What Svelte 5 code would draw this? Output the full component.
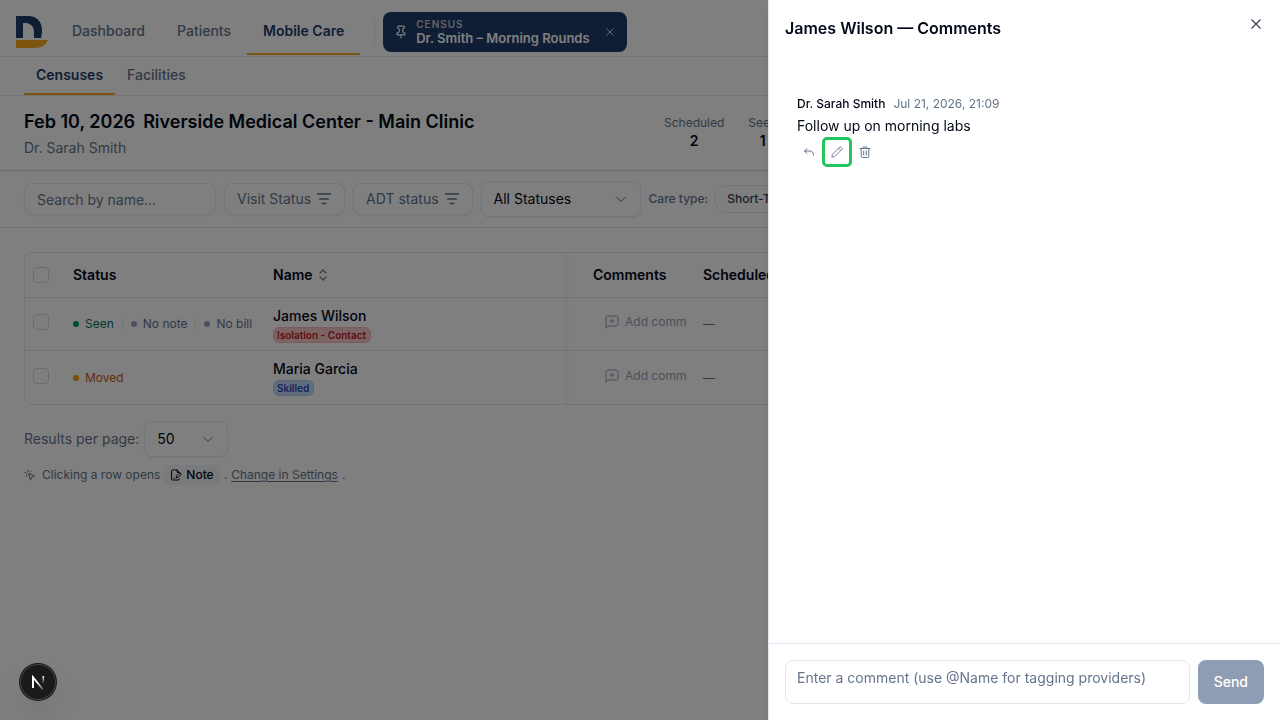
<script lang="ts">
  let search = '';
  let status = 'All Statuses';
  let perPage = '50';
  let draft = '';

  const navLinks = ['Dashboard', 'Patients', 'Mobile Care'];
  const tabs = ['Censuses', 'Facilities'];
  const stats = [
    { label: 'Scheduled', value: 2 },
    { label: 'Seen', value: 1 },
  ];
  const filters = ['Visit Status', 'ADT status'];

  const rows = [
    {
      name: 'James Wilson',
      tag: 'Isolation - Contact',
      tagKind: 'danger',
      states: [
        { text: 'Seen', kind: 'seen' },
        { text: 'No note', kind: 'none' },
        { text: 'No bill', kind: 'none' },
      ],
    },
    {
      name: 'Maria Garcia',
      tag: 'Skilled',
      tagKind: 'info',
      states: [{ text: 'Moved', kind: 'moved' }],
    },
  ];
</script>

<div class="page">
  <header class="topbar">
    <a class="logo" href="#home" aria-label="Home">
      <svg width="32" height="32" viewBox="0 0 32 32">
        <path fill="#213d6b" d="M0 0h12c9 0 14 6 14 14 0 3-.3 5.500-1 8h-7v-6c0-5-3-8.500-8-9H7v15H0z" />
        <path fill="#f9a81c" d="M0 24h32c-2 5-6.500 8-13 8H0z" />
      </svg>
    </a>
    <nav class="main-nav">
      {#each navLinks as link}
        <a href="#nav" class:active={link === 'Mobile Care'}>{link}</a>
      {/each}
    </nav>
    <div class="divider"></div>
    <div class="pinned">
      <svg class="pin" width="14" height="14" viewBox="0 0 24 24" fill="none" stroke="currentColor" stroke-width="2" stroke-linecap="round" stroke-linejoin="round">
        <path d="M12 17v5M9 10.800a2 2 0 0 1-1.100 1.800l-1.800.9A2 2 0 0 0 5 15.200V16a1 1 0 0 0 1 1h12a1 1 0 0 0 1-1v-.8a2 2 0 0 0-1.100-1.800l-1.800-.9A2 2 0 0 1 15 10.800V7a1 1 0 0 1 1-1 2 2 0 0 0 0-4H8a2 2 0 0 0 0 4 1 1 0 0 1 1 1z" />
      </svg>
      <div class="pinned-text">
        <span class="kicker">CENSUS</span>
        <span class="pinned-title">Dr. Smith – Morning Rounds</span>
      </div>
      <button class="unpin" aria-label="Unpin census">
        <svg width="8" height="8" viewBox="0 0 8 8" fill="none" stroke="currentColor"><path d="M0.500 0.500l7 7M7.500 0.500l-7 7" /></svg>
      </button>
    </div>
  </header>

  <nav class="tabs">
    {#each tabs as tab}
      <a href="#tab" class:active={tab === 'Censuses'}>{tab}</a>
    {/each}
  </nav>

  <section class="heading">
    <div class="heading-main">
      <h1><span>Feb 10, 2026</span><span>Riverside Medical Center - Main Clinic</span></h1>
      <p>Dr. Sarah Smith</p>
    </div>
    <dl class="stats">
      {#each stats as stat}
        <div>
          <dt>{stat.label}</dt>
          <dd>{stat.value}</dd>
        </div>
      {/each}
    </dl>
  </section>

  <section class="filters">
    <input class="search" type="text" placeholder="Search by name..." aria-label="Search by name" bind:value={search} />
    {#each filters as filter}
      <button class="filter">
        {filter}
        <svg width="16" height="16" viewBox="0 0 16 16" fill="none" stroke="currentColor" stroke-width="1.500" stroke-linecap="round">
          <path d="M1.500 3h13M3.700 8h8.600M6.200 12.500h3.600" />
        </svg>
      </button>
    {/each}
    <div class="select status-select">
      <select aria-label="Status" bind:value={status}>
        <option>All Statuses</option>
      </select>
      <svg width="16" height="16" viewBox="0 0 16 16" fill="none" stroke="currentColor" stroke-linecap="round" stroke-linejoin="round"><path d="M3.500 6L8 10.500 12.500 6" /></svg>
    </div>
    <span class="care-label">Care type:</span>
    <button class="care-pill">Short-Term</button>
  </section>

  <main>
    <div class="table-wrap">
      <table>
        <colgroup>
          <col class="c-check" />
          <col class="c-status" />
          <col class="c-name" />
          <col class="c-comments" />
          <col />
        </colgroup>
        <thead>
          <tr>
            <th><input type="checkbox" aria-label="Select all" /></th>
            <th>Status</th>
            <th>
              <button class="sort">
                Name
                <svg width="8" height="12" viewBox="0 0 8 12" fill="none" stroke="currentColor" stroke-width="1.200" stroke-linecap="round" stroke-linejoin="round"><path d="M1 4l3-3 3 3M1 8l3 3 3-3" /></svg>
              </button>
            </th>
            <th class="after-sticky">Comments</th>
            <th>Scheduled</th>
          </tr>
        </thead>
        <tbody>
          {#each rows as row}
            <tr>
              <td><input type="checkbox" aria-label={`Select ${row.name}`} /></td>
              <td>
                <div class="states">
                  {#each row.states as state}
                    <span class="state {state.kind}">{state.text}</span>
                  {/each}
                </div>
              </td>
              <td>
                <div class="patient">{row.name}</div>
                <span class="tag {row.tagKind}">{row.tag}</span>
              </td>
              <td class="after-sticky">
                <button class="add-comment">
                  <svg width="14" height="14" viewBox="0 0 14 14" fill="none" stroke="currentColor" stroke-linecap="round" stroke-linejoin="round">
                    <path d="M1 13V2.500Q1 1 2.500 1h9Q13 1 13 2.500v7Q13 11 11.500 11H3zM7 4v4M5 6h4" />
                  </svg>
                  <span>Add comment</span>
                </button>
              </td>
              <td class="empty">—</td>
            </tr>
          {/each}
        </tbody>
      </table>
    </div>

    <div class="per-page">
      <label for="per-page">Results per page:</label>
      <div class="select page-select">
        <select id="per-page" bind:value={perPage}>
          <option>50</option>
        </select>
        <svg width="16" height="16" viewBox="0 0 16 16" fill="none" stroke="currentColor" stroke-linecap="round" stroke-linejoin="round"><path d="M3.500 6L8 10.500 12.500 6" /></svg>
      </div>
    </div>

    <div class="hint">
      <svg class="click" width="12" height="12" viewBox="0 0 24 24" fill="none" stroke="currentColor" stroke-width="2" stroke-linecap="round" stroke-linejoin="round">
        <path d="M14 4.100L12 6M5.100 8l-2.900-.8M6 12l-1.900 2M7.200 2.200L8 5.100M9 9.700a.5.500 0 0 1 .7-.7l11 4.500a.5.500 0 0 1-.1.900l-4.200 1.100a2 2 0 0 0-1.400 1.400l-1.100 4.200a.5.500 0 0 1-.9.100z" />
      </svg>
      <span>Clicking a row opens</span>
      <span class="note">
        <svg width="12" height="12" viewBox="0 0 24 24" fill="none" stroke="currentColor" stroke-width="2" stroke-linecap="round" stroke-linejoin="round">
          <path d="M19 7l-5-5H5a2 2 0 0 0-2 2v16a2 2 0 0 0 2 2h12a2 2 0 0 0 2-2M14 2v4a1 1 0 0 0 1 1h4M8 18h1M21.400 11.600a1 1 0 0 0-3-3l-5 5-1 4 4-1z" />
        </svg>
        Note
      </span>
      <span>.</span>
      <a href="#settings">Change in Settings</a>
      <span>.</span>
    </div>
  </main>
</div>

<div class="overlay"></div>

<aside class="sheet" role="dialog" aria-label="James Wilson — Comments">
  <div class="sheet-head">
    <h2>James Wilson — Comments</h2>
    <button class="close" aria-label="Close">
      <svg width="10" height="10" viewBox="0 0 10 10" fill="none" stroke="currentColor" stroke-width="1.200"><path d="M0.500 0.500l9 9M9.500 0.500l-9 9" /></svg>
    </button>
  </div>

  <div class="thread">
    <article>
      <div class="meta"><strong>Dr. Sarah Smith</strong><time>Jul 21, 2026, 21:09</time></div>
      <p>Follow up on morning labs</p>
      <div class="actions">
        <button aria-label="Reply">
          <svg width="12" height="12" viewBox="0 0 12 12" fill="none" stroke="currentColor" stroke-linecap="round" stroke-linejoin="round"><path d="M4 2.500L1.500 5 4 7.500M1.500 5H7q3.500 0 3.500 4" /></svg>
        </button>
        <button class="current" aria-label="Edit">
          <svg width="12" height="12" viewBox="0 0 12 12" fill="none" stroke="currentColor" stroke-width="0.900" stroke-linejoin="round"><path d="M.8 11.200l.7-3L8.600 1.100q.8-.6 1.600.1l.6.600q.7.800.1 1.600L3.800 10.500zM7.500 2.200l2.300 2.300" /></svg>
        </button>
        <button aria-label="Delete">
          <svg width="12" height="12" viewBox="0 0 12 12" fill="none" stroke="currentColor" stroke-linecap="round" stroke-linejoin="round"><path d="M1 2.500h10M4 2.500v-1q0-.5.500-.5h3q.5 0 .5.500v1M2.200 2.500v7.800q0 1.200 1.200 1.200h5.200q1.200 0 1.200-1.200V2.500M4.700 5v4M7.300 5v4" /></svg>
        </button>
      </div>
    </article>
  </div>

  <form class="composer" on:submit|preventDefault>
    <textarea rows="1" aria-label="Comment" placeholder="Enter a comment (use @Name for tagging providers)" bind:value={draft}></textarea>
    <button type="submit" disabled={!draft}>Send</button>
  </form>
</aside>

<button class="dev-badge" aria-label="Open dev tools">
  <svg width="36" height="36" viewBox="0 0 36 36" fill="none">
    <defs>
      <linearGradient id="stem" x1="0" y1="12" x2="0" y2="20" gradientUnits="userSpaceOnUse">
        <stop offset="0" stop-color="#fff" />
        <stop offset="1" stop-color="#fff" stop-opacity="0" />
      </linearGradient>
      <linearGradient id="slash" x1="18" y1="18" x2="24" y2="25" gradientUnits="userSpaceOnUse">
        <stop offset="0" stop-color="#fff" />
        <stop offset="1" stop-color="#fff" stop-opacity="0.200" />
      </linearGradient>
    </defs>
    <path d="M13 24V13.200L23 25.500" stroke="url(#slash)" stroke-width="1.800" />
    <path d="M13 24V12.500" stroke="#fff" stroke-width="1.800" />
    <path d="M23.300 12v8" stroke="url(#stem)" stroke-width="1.600" />
  </svg>
</button>

<style>
  :global(body) {
    margin: 0;
    background: #fff;
    overflow: hidden;
  }

  :global(#app) {
    font-family: Inter, 'Liberation Sans', sans-serif;
    font-size: 14px;
    line-height: 20px;
    color: #020817;
  }

  button,
  input,
  select,
  textarea {
    font: inherit;
    color: inherit;
    box-sizing: border-box;
  }

  button {
    display: flex;
    align-items: center;
    justify-content: center;
    padding: 0;
    border: 0;
    background: none;
    cursor: pointer;
  }

  a {
    color: inherit;
    text-decoration: none;
  }

  h1,
  h2,
  p,
  dl,
  dd {
    margin: 0;
  }

  svg {
    flex-shrink: 0;
  }

  .page {
    min-height: 100vh;
    overflow: hidden;
  }

  .topbar {
    display: flex;
    align-items: center;
    height: 57px;
    padding: 8px 16px 0;
    box-sizing: border-box;
    border-bottom: 1px solid #e2e8f0;
  }

  .logo {
    display: flex;
    margin-right: 8px;
  }

  .main-nav {
    display: flex;
    align-self: stretch;
  }

  .main-nav a {
    margin-bottom: 1px;
    padding: 13px 16px 0;
    border-bottom: 2px solid transparent;
    font-weight: 500;
    color: #64748b;
  }

  .main-nav a.active,
  .tabs a.active {
    border-bottom-color: #f9a81c;
    font-weight: 600;
    color: #213d6b;
  }

  .divider {
    width: 1px;
    height: 28px;
    margin: 0 8px 0 14px;
    background: #e2e8f0;
  }

  .pinned {
    display: flex;
    align-items: center;
    height: 40px;
    padding: 0 13px 0 11px;
    box-sizing: border-box;
    border-radius: 8px;
    background: #213d6b;
    color: #fff;
  }

  .pin {
    margin-right: 8px;
  }

  .pinned-text {
    display: flex;
    flex-direction: column;
  }

  .kicker {
    font-size: 10px;
    line-height: 12px;
    font-weight: 600;
    letter-spacing: 1px;
    opacity: 0.7;
  }

  .pinned-title {
    font-size: 13px;
    line-height: 16px;
    font-weight: 600;
  }

  .unpin {
    margin-left: 16px;
    width: 8px;
    height: 16px;
    opacity: 0.8;
  }

  .tabs {
    display: flex;
    height: 38px;
    padding: 0 24px;
    border-bottom: 1px solid #e2e8f0;
  }

  .tabs a {
    padding: 8px 12px;
    border-bottom: 2px solid transparent;
    box-sizing: border-box;
    font-weight: 500;
    color: #64748b;
  }

  .heading {
    display: flex;
    justify-content: space-between;
    padding: 12px 24px;
    border-bottom: 1px solid #d3dae5;
  }

  h1 {
    display: flex;
    gap: 8px;
    font-size: 18px;
    line-height: 28px;
    font-weight: 600;
  }

  .heading-main p {
    margin-top: 2px;
    color: #64748b;
  }

  .stats {
    display: flex;
    flex: 0 0 592px;
    gap: 24px;
    padding-top: 7px;
    text-align: center;
  }

  .stats dt {
    font-size: 12px;
    line-height: 16px;
    color: #64748b;
  }

  .stats dd {
    font-weight: 600;
  }

  .filters {
    display: flex;
    align-items: center;
    gap: 8px;
    padding: 10px 24px;
    border-bottom: 1px solid #e2e8f0;
  }

  .search,
  .filter,
  .select select,
  .care-pill {
    border: 1px solid #e2e8f0;
    border-radius: 8px;
    background: #fff;
    box-shadow: 0 1px 2px rgba(0, 0, 0, 0.05);
  }

  .search {
    width: 192px;
    height: 32px;
    padding: 1px 12px 0;
  }

  .search::placeholder,
  textarea::placeholder {
    color: #64748b;
    opacity: 1;
  }

  .filter {
    gap: 5px;
    height: 32px;
    padding: 0 12px;
    color: #64748b;
  }

  .select {
    display: grid;
    align-items: center;
  }

  .select select,
  .select svg {
    grid-area: 1 / 1;
  }

  .select svg {
    justify-self: end;
    margin-right: 12px;
    color: #64748b;
    pointer-events: none;
  }

  .select select {
    width: 100%;
    height: 36px;
    padding: 0 12px;
    appearance: none;
  }

  .status-select {
    width: 160px;
  }

  .page-select {
    width: 84px;
  }

  .care-label {
    font-size: 12px;
    font-weight: 500;
    color: #64748b;
  }

  .care-pill {
    height: 28px;
    margin-left: -2px;
    padding: 0 12px;
    border-radius: 14px;
    box-shadow: none;
    font-size: 12px;
    font-weight: 500;
    color: #334155;
  }

  main {
    padding: 24px;
  }

  .table-wrap {
    overflow: hidden;
    border: 1px solid #e2e8f0;
    border-radius: 8px;
  }

  table {
    width: 100%;
    table-layout: fixed;
    border-collapse: collapse;
  }

  .c-check {
    width: 40px;
  }

  .c-status {
    width: 200px;
  }

  .c-name {
    width: 300px;
  }

  .c-comments {
    width: 130px;
  }

  th,
  td {
    padding: 0 8px;
    text-align: left;
  }

  th {
    height: 44px;
    font-weight: 600;
  }

  td {
    height: 52px;
    border-top: 1px solid #e2e8f0;
  }

  tr:last-child td {
    height: 53px;
  }

  th.after-sticky,
  td.after-sticky {
    padding-left: 28px;
    background: linear-gradient(to right, rgba(0, 0, 0, 0.04), transparent 6px);
  }

  input[type='checkbox'] {
    display: block;
    width: 16px;
    height: 16px;
    margin: 0;
    appearance: none;
    border: 1px solid #d3dae5;
    border-radius: 4px;
  }

  td input[type='checkbox'] {
    margin-bottom: 4px;
  }

  .sort {
    gap: 6px;
    font-weight: 600;
  }

  .sort svg {
    color: #64748b;
  }

  .states {
    display: flex;
    font-size: 12px;
    line-height: 16px;
    white-space: nowrap;
  }

  .state {
    display: flex;
    align-items: center;
    color: #64748b;
  }

  .state::before {
    content: '';
    width: 6px;
    height: 6px;
    margin-right: 6px;
    border-radius: 50%;
    background: #94a3b8;
  }

  .state + .state {
    margin-left: 8px;
    padding-left: 9px;
    background: linear-gradient(#e2e8f0, #e2e8f0) left / 1px 10px no-repeat;
  }

  .seen {
    color: #047857;
  }

  .seen::before {
    background: #059669;
  }

  .moved {
    color: #c2570c;
  }

  .moved::before {
    background: #f59e0b;
  }

  .patient {
    font-weight: 500;
  }

  .tag {
    display: block;
    width: fit-content;
    margin-top: 1px;
    padding: 0 4px 0 3px;
    border: 1px solid;
    border-radius: 6px;
    font-size: 10px;
    line-height: 14px;
    font-weight: 600;
  }

  .danger {
    border-color: #f5b5b5;
    background: #fbc8c8;
    color: #b91c1c;
  }

  .info {
    border-color: #a9c8f5;
    background: #c5dbf8;
    color: #2545b8;
  }

  .add-comment {
    width: 94px;
    justify-content: flex-start;
    gap: 6px;
    margin-bottom: 4px;
    padding-left: 12px;
    box-sizing: border-box;
    overflow: hidden;
    font-size: 12px;
    white-space: nowrap;
    color: #94a3b8;
  }

  .add-comment span {
    overflow: hidden;
  }

  .empty {
    font-size: 12px;
    color: #64748b;
  }

  .per-page {
    display: flex;
    align-items: center;
    gap: 5px;
    margin-top: 16px;
    color: #64748b;
  }

  .per-page select {
    color: #020817;
  }

  .hint {
    display: flex;
    align-items: center;
    gap: 4px;
    margin-top: 8px;
    font-size: 12px;
    color: #64748b;
  }

  .hint .click {
    margin-right: 2px;
  }

  .hint a {
    text-decoration: underline;
    text-underline-offset: 2px;
  }

  .note {
    display: flex;
    align-items: center;
    gap: 4px;
    padding: 0 6px;
    border-radius: 4px;
    background: #f1f5f9;
    font-weight: 500;
    color: #020817;
  }

  .overlay {
    position: fixed;
    inset: 0;
    background: rgba(0, 0, 0, 0.5);
  }

  .sheet {
    position: fixed;
    top: 0;
    right: 0;
    bottom: 0;
    display: flex;
    flex-direction: column;
    width: 40%;
    box-sizing: border-box;
    border-left: 1px solid #e2e8f0;
    background: #fff;
    box-shadow: 0 10px 15px -3px rgba(0, 0, 0, 0.1), 0 4px 6px -4px rgba(0, 0, 0, 0.1);
  }

  .sheet-head {
    display: flex;
    align-items: flex-start;
    justify-content: space-between;
    padding: 16px;
  }

  h2 {
    font-size: 16px;
    line-height: 24px;
    font-weight: 600;
  }

  .close {
    width: 16px;
    height: 16px;
    color: #334155;
  }

  .thread {
    flex: 1;
    padding: 38px 28px;
    overflow: auto;
  }

  .meta {
    display: flex;
    gap: 8px;
    font-size: 12px;
    line-height: 20px;
  }

  .meta strong {
    font-weight: 500;
  }

  .meta time {
    color: #64748b;
  }

  .thread p {
    margin-top: 2px;
  }

  .actions {
    display: flex;
    gap: 4px;
    margin-top: 4px;
    color: #64748b;
  }

  .actions button {
    width: 24px;
    height: 24px;
    border-radius: 2px;
  }

  .actions .current {
    outline: 3px solid #22c55e;
  }

  .composer {
    display: flex;
    gap: 8px;
    padding: 16px;
    border-top: 1px solid #e2e8f0;
  }

  textarea {
    flex: 1;
    height: 44px;
    padding: 7px 11px;
    border: 1px solid #e2e8f0;
    border-radius: 8px;
    resize: none;
  }

  .composer button {
    padding: 0 16px;
    border-radius: 8px;
    background: #213d6b;
    font-weight: 500;
    color: #fff;
  }

  .composer button:disabled {
    opacity: 0.5;
  }

  .dev-badge {
    position: fixed;
    left: 20px;
    bottom: 20px;
    width: 36px;
    height: 36px;
    border-radius: 50%;
    background: #1a1a1a;
    box-shadow: inset 0 0 0 1px #444, 0 0 0 1px #171717, 0 16px 32px -8px rgba(0, 0, 0, 0.24);
  }
</style>
